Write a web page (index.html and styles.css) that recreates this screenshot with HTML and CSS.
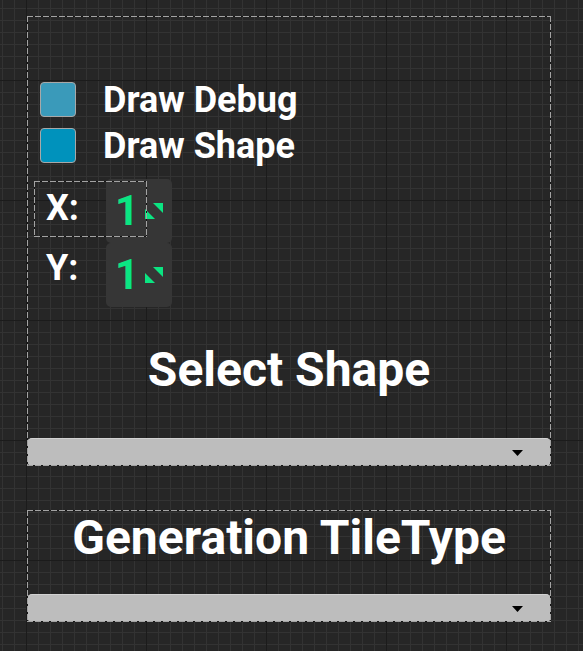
FILE: index.html
```html
<!DOCTYPE html>
<html lang="en">
<head>
<meta charset="utf-8">
<title>Widget Designer</title>
<link rel="stylesheet" href="styles.css">
</head>
<body>
<div class="canvas">
  <section class="panel panel-main">
    <div class="check-row">
      <span class="checkbox checkbox-hover"></span>
      <span class="check-label">Draw Debug</span>
    </div>
    <div class="check-row check-row-next">
      <span class="checkbox"></span>
      <span class="check-label">Draw Shape</span>
    </div>
    <div class="coords">
      <div class="coord-row">
        <div class="coord-label coord-label-x selected">X:</div>
        <div class="spin">
          <span class="spin-value">1</span>
          <svg class="spin-icon" viewBox="0 0 20 20" width="20" height="20"><polygon points="9,2 19,2 19,12" fill="#0be582"/><polygon points="1,8 1,18 11,18" fill="#0be582"/></svg>
        </div>
      </div>
      <div class="coord-row">
        <div class="coord-label coord-label-y">Y:</div>
        <div class="spin">
          <span class="spin-value">1</span>
          <svg class="spin-icon" viewBox="0 0 20 20" width="20" height="20"><polygon points="9,2 19,2 19,12" fill="#0be582"/><polygon points="1,8 1,18 11,18" fill="#0be582"/></svg>
        </div>
      </div>
    </div>
    <h2 class="panel-title">Select Shape</h2>
    <div class="combo"><svg class="combo-arrow" viewBox="0 0 11 6" width="11" height="6"><polygon points="0,0 11,0 5.5,6" fill="#000"/></svg></div>
  </section>
  <section class="panel panel-tile">
    <h2 class="panel-title panel-title-top">Generation TileType</h2>
    <div class="combo combo-tight"><svg class="combo-arrow" viewBox="0 0 11 6" width="11" height="6"><polygon points="0,0 11,0 5.5,6" fill="#000"/></svg></div>
  </section>
</div>
</body>
</html>
```

FILE: styles.css
```css
html, body {
  margin: 0;
  padding: 0;
}

body {
  min-height: 100vh;
  background-color: #262626;
  background-image:
    linear-gradient(to right, #1b1b1b 1px, transparent 1px),
    linear-gradient(to bottom, #1b1b1b 1px, transparent 1px),
    linear-gradient(to right, #333333 1px, transparent 1px),
    linear-gradient(to bottom, #333333 1px, transparent 1px);
  background-size: 120px 120px, 120px 120px, 12px 12px, 12px 12px;
  background-position: 26px 80px, 26px 80px, 2px 8px, 2px 8px;
  font-family: Roboto, "Liberation Sans", sans-serif;
  color: #ffffff;
}

.canvas {
  padding: 16px 0 0 27px;
  width: 524px;
}

.panel {
  position: relative;
}

.panel::after,
.selected::after {
  content: "";
  position: absolute;
  pointer-events: none;
  z-index: 2;
  background:
    repeating-linear-gradient(to right, #a3a3a3 0 6px, #161616 6px 8px) left top / 100% 1px no-repeat,
    repeating-linear-gradient(to right, #a3a3a3 0 6px, #161616 6px 8px) left bottom / 100% 1px no-repeat,
    repeating-linear-gradient(to bottom, #a3a3a3 0 6px, #161616 6px 8px) left top / 1px 100% no-repeat,
    repeating-linear-gradient(to bottom, #a3a3a3 0 6px, #161616 6px 8px) right top / 1px 100% no-repeat;
}

.panel::after {
  inset: 0;
}

.panel-main {
  padding-top: 66px;
}

.panel-tile {
  margin-top: 44px;
}

.check-row {
  display: flex;
  align-items: center;
  height: 35px;
  padding-left: 13px;
  gap: 27px;
}

.check-row-next {
  margin-top: 11px;
}

.checkbox {
  width: 36px;
  height: 35px;
  box-sizing: border-box;
  border: 1px solid #a8a8a8;
  border-radius: 4px;
  background: #0092bc;
}

.checkbox-hover {
  background: #3a9aba;
}

.check-label {
  font-size: 36px;
  line-height: 42px;
  font-weight: 700;
  white-space: nowrap;
}

.coords {
  margin-top: 16px;
}

.coord-row {
  display: flex;
  height: 64px;
}

.coord-label {
  position: relative;
  width: 72px;
  margin-left: 7px;
  box-sizing: border-box;
  padding-left: 12px;
  font-size: 36px;
  line-height: 42px;
  font-weight: 700;
}

.coord-label-x {
  padding-top: 8px;
}

.coord-label-y {
  padding-top: 4px;
}

.selected::after {
  left: 0;
  top: 2px;
  width: 113px;
  height: 56px;
}

.spin {
  display: flex;
  align-items: center;
  width: 66px;
  height: 64px;
  box-sizing: border-box;
  padding-left: 9px;
  background: #363636;
  border-radius: 5px;
}

.spin-value {
  font-size: 42px;
  line-height: 48px;
  font-weight: 700;
  color: #0be582;
}

.spin-icon {
  display: block;
  margin-left: 5px;
}

.panel-title {
  margin: 35px 0 0;
  font-size: 48px;
  line-height: 56px;
  font-weight: 700;
  text-align: center;
  white-space: nowrap;
}

.panel-title-top {
  margin-top: 0;
}

.combo {
  display: flex;
  align-items: center;
  justify-content: flex-end;
  margin-top: 40px;
  height: 28px;
  box-sizing: border-box;
  padding-right: 28px;
  background: #bdbdbd;
  border-top: 1px solid #d2d2d2;
  border-radius: 5px;
}

.combo-tight {
  margin-top: 28px;
}

.combo-arrow {
  display: block;
}
```
